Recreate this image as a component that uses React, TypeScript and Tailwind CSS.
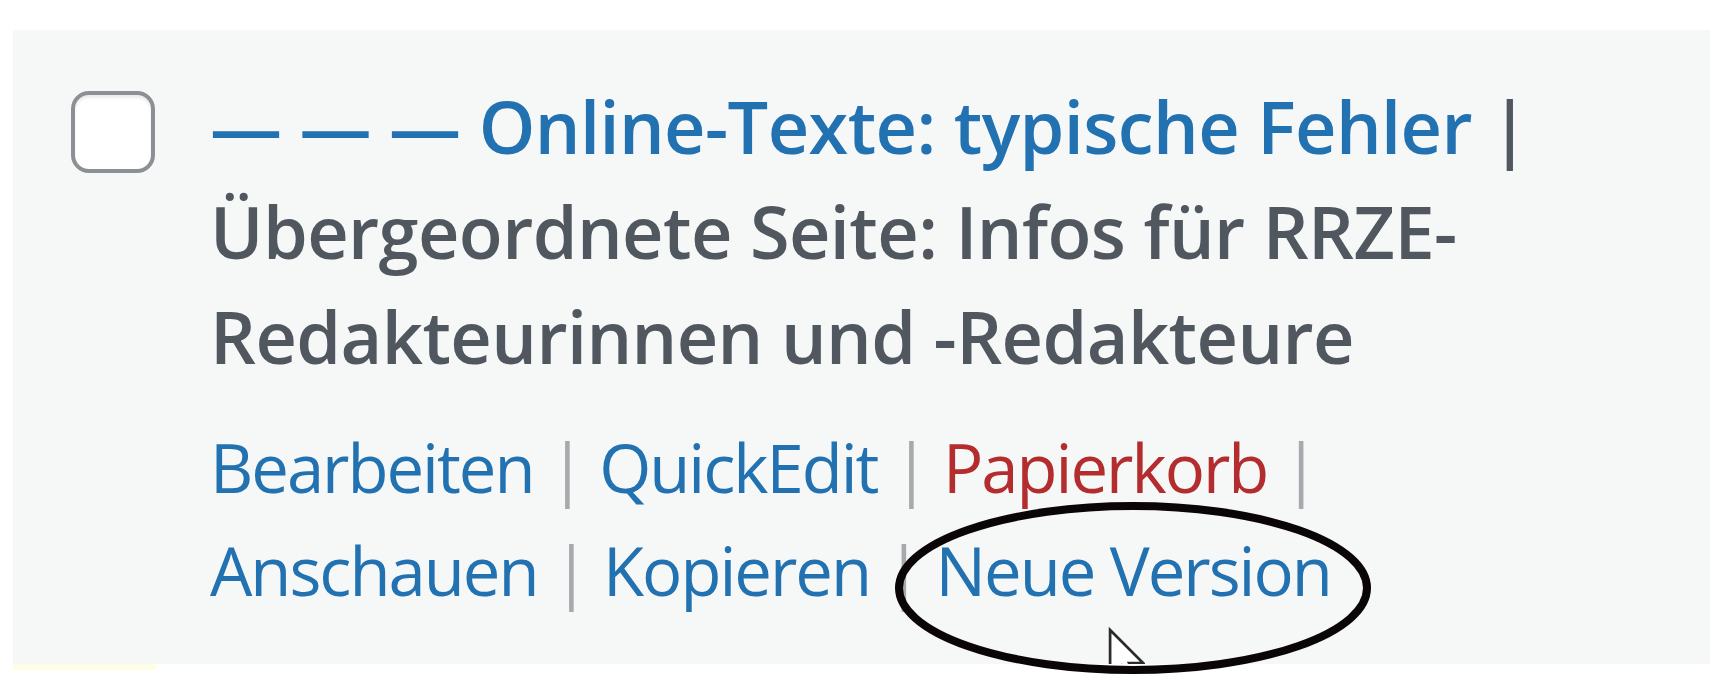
import type { ReactNode } from "react";

const font = { fontFamily: '"Open Sans", "Noto Sans", sans-serif' };

function Sep() {
  return <span className="text-[#a7aaad]"> | </span>;
}

function Action({ children, danger }: { children: ReactNode; danger?: boolean }) {
  return (
    <a href="#" className={danger ? "text-[#b32d2e]" : "text-[#2271b1]"}>
      {children}
    </a>
  );
}

export default function App() {
  return (
    <div className="min-h-screen bg-white pl-[13px] pt-[30px]" style={font}>
      <div className="relative w-[1697px]">
        <div className="relative flex h-[634px] overflow-hidden bg-[#f6f7f7]">
          <div className="pl-[58px] pt-[61px]">
            <div className="h-[82px] w-[84px] rounded-[18px] border-[4px] border-[#8c8f94] bg-white shadow-[inset_0_3px_3px_rgba(0,0,0,0.08)]" />
          </div>

          <div className="pl-[55px] pt-[44px]">
            <strong className="block text-[72px] font-semibold leading-[105px] tracking-[-0.008em] text-[#50575e]">
              <span className="block">
                <a href="#" className="text-[#2271b1]">
                  — — — Online-Texte: typische Fehler
                </a>{" "}
                |
              </span>
              <span className="block">Übergeordnete Seite: Infos für RRZE-</span>
              <span className="block">Redakteurinnen und -Redakteure</span>
            </strong>

            <div className="mt-[27px] text-[67px] leading-[103px] tracking-[-0.03em]">
              <div>
                <Action>Bearbeiten</Action>
                <Sep />
                <Action>QuickEdit</Action>
                <Sep />
                <Action danger>Papierkorb</Action>
                <Sep />
              </div>
              <div>
                <Action>Anschauen</Action>
                <Sep />
                <Action>Kopieren</Action>
                <Sep />
                <Action>Neue Version</Action>
              </div>
            </div>
          </div>

          {/* mouse pointer */}
          <svg
            className="absolute left-[1094px] top-[597px]"
            width="38"
            height="60"
            viewBox="0 0 12.6 20"
          >
            <path
              d="M1 1 L1 16.5 L4.8 12.9 L7.6 19 L10 18 L7.3 12 L12 12 Z"
              fill="#fff"
              stroke="#2b2b2b"
              strokeWidth="0.9"
              strokeLinejoin="miter"
            />
          </svg>
        </div>

        <div className="h-[6px] w-[143px] bg-[#fffde3]" />

        {/* hand-drawn highlight around "Neue Version" */}
        <svg
          className="absolute left-[880px] top-[470px]"
          width="480"
          height="176"
          viewBox="0 0 480 176"
        >
          <ellipse
            cx="240"
            cy="88"
            rx="234"
            ry="82"
            fill="none"
            stroke="#0a0608"
            strokeWidth="8"
          />
        </svg>
      </div>
    </div>
  );
}
